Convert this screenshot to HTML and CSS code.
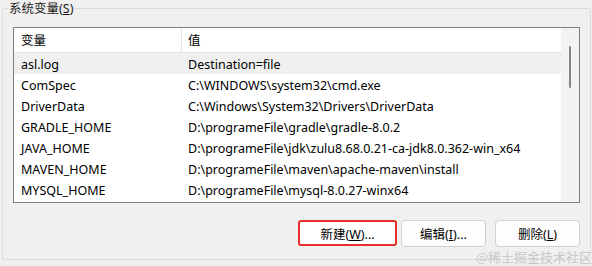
FILE: index.html
```html
<!DOCTYPE html>
<html lang="zh-CN">

<head>
    <meta charset="UTF-8">
    <meta name="viewport" content="width=device-width, initial-scale=1.0">
    <title>系统变量</title>
    <link rel="stylesheet" href="styles.css">
</head>

<body>
    <fieldset class="group">
        <legend>系统变量(<u>S</u>)</legend>

        <div class="listbox">
            <div class="list">
                <div class="list-header">
                    <div class="col-name">变量</div>
                    <div class="col-value">值</div>
                </div>
                <div class="row selected">
                    <div class="col-name">asl.log</div>
                    <div class="col-value">Destination=file</div>
                </div>
                <div class="row">
                    <div class="col-name">ComSpec</div>
                    <div class="col-value">C:\WINDOWS\system32\cmd.exe</div>
                </div>
                <div class="row">
                    <div class="col-name">DriverData</div>
                    <div class="col-value">C:\Windows\System32\Drivers\DriverData</div>
                </div>
                <div class="row">
                    <div class="col-name">GRADLE_HOME</div>
                    <div class="col-value">D:\programeFile\gradle\gradle-8.0.2</div>
                </div>
                <div class="row">
                    <div class="col-name">JAVA_HOME</div>
                    <div class="col-value">D:\programeFile\jdk\zulu8.68.0.21-ca-jdk8.0.362-win_x64</div>
                </div>
                <div class="row">
                    <div class="col-name">MAVEN_HOME</div>
                    <div class="col-value">D:\programeFile\maven\apache-maven\install</div>
                </div>
                <div class="row">
                    <div class="col-name">MYSQL_HOME</div>
                    <div class="col-value">D:\programeFile\mysql-8.0.27-winx64</div>
                </div>
            </div>
            <div class="scrollbar">
                <div class="thumb"></div>
            </div>
        </div>

        <div class="buttons">
            <button type="button" class="btn btn-new">新建(<u>W</u>)...</button>
            <button type="button" class="btn">编辑(<u>I</u>)...</button>
            <button type="button" class="btn">删除(<u>L</u>)</button>
        </div>
    </fieldset>

    <div class="watermark">@稀土掘金技术社区</div>
</body>

</html>
```

FILE: styles.css
```css
/* Page */
body {
    margin: 0;
    width: 592px;
    height: 266px;
    background-color: #f0f0f0;
    font-family: "Noto Sans", "Noto Sans CJK SC", sans-serif;
    font-size: 12px;
    color: #000;
    position: relative;
    overflow: hidden;
}

/* Group box with its label */
.group {
    margin: -1px 1px 0 2px;
    padding: 10px 10px 0 10px;
    height: 249px;
    border: 1px solid #dcdcdc;
    border-radius: 2px;
}

.group legend {
    margin-left: -5px;
    padding: 2px 1px 0 1px;
    line-height: 16px;
    font-size: 12.5px;
    color: #1a1a1a;
}

/* List view */
.listbox {
    display: flex;
    height: 174px;
    border: 1px solid #7f7f7f;
    background-color: #fff;
}

.list {
    flex: 1;
    font-size: 12.5px;
}

.list-header,
.row {
    display: flex;
}

.list-header {
    height: 23px;
    padding-top: 1px;
    line-height: 24px;
    border-bottom: 1px solid #e5e5e5;
}

.list-header .col-name {
    border-right: 1px solid #e5e5e5;
    margin-top: -1px;
    padding-top: 1px;
}

.row {
    height: 20px;
    padding-top: 1px;
    line-height: 21px;
    white-space: nowrap;
}

.row.selected {
    background-color: #f0f0f0;
}

.col-name {
    width: 168px;
    padding-left: 7px;
    box-sizing: border-box;
}

.col-value {
    padding-left: 6px;
}

/* Scrollbar */
.scrollbar {
    width: 18px;
    background-color: #f2f2f2;
    display: flex;
    justify-content: center;
    padding-top: 18px;
    box-sizing: border-box;
}

.thumb {
    width: 2px;
    height: 42px;
    border-radius: 1px;
    background-color: #858585;
}

/* Buttons */
.buttons {
    display: flex;
    justify-content: flex-end;
    gap: 9px;
    margin-top: 17px;
}

.btn {
    width: 85px;
    height: 27px;
    padding: 0;
    border: 1px solid #d0d0d0;
    border-radius: 4px;
    background-color: #fdfdfd;
    font-family: inherit;
    font-size: 12.5px;
    color: #000;
}

.btn-new {
    width: 99px;
    height: 26px;
    margin-right: -5px;
    border: 2px solid #e8302a;
    border-radius: 3px;
    background-color: #fff;
}

/* Watermark overlay */
.watermark {
    position: absolute;
    right: 0;
    bottom: 2px;
    font-family: "Noto Sans CJK SC", sans-serif;
    font-size: 13px;
    line-height: 15px;
    color: #c9c9c9;
}
```
